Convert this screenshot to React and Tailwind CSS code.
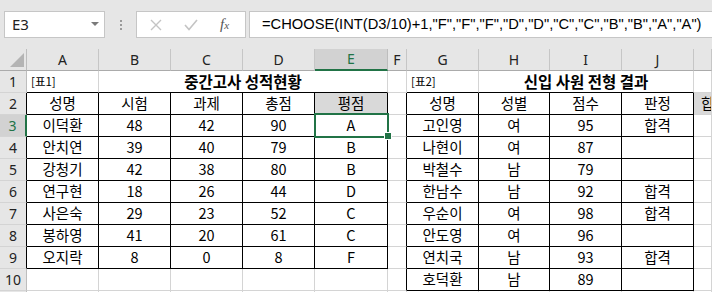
import React from "react";

const colWidths = "grid-cols-[27px_72px_72px_72px_72px_73px_19px_72px_71px_72px_72px_1fr]";
const letters = ["", "A", "B", "C", "D", "E", "F", "G", "H", "I", "J", ""];

const t1 = [
  ["성명", "시험", "과제", "총점", "평점"],
  ["이덕환", "48", "42", "90", "A"],
  ["안치연", "39", "40", "79", "B"],
  ["강청기", "42", "38", "80", "B"],
  ["연구현", "18", "26", "44", "D"],
  ["사은숙", "29", "23", "52", "C"],
  ["봉하영", "41", "20", "61", "C"],
  ["오지락", "8", "0", "8", "F"],
];
const t2 = [
  ["성명", "성별", "점수", "판정"],
  ["고인영", "여", "95", "합격"],
  ["나현이", "여", "87", ""],
  ["박철수", "남", "79", ""],
  ["한남수", "남", "92", "합격"],
  ["우순이", "여", "98", "합격"],
  ["안도영", "여", "96", ""],
  ["연치국", "남", "93", "합격"],
  ["호덕환", "남", "89", ""],
];

function inT1(r, c) {
  return r >= 2 && r <= 9 && c >= 1 && c <= 5;
}
function inT2(r, c) {
  return r >= 2 && r <= 10 && c >= 7 && c <= 10;
}
function inAny(r, c) {
  return inT1(r, c) || inT2(r, c);
}

function cellText(r, c) {
  if (c >= 1 && c <= 5 && r >= 2 && r <= 9) return t1[r - 2][c - 1];
  if (c >= 7 && c <= 10 && r >= 2 && r <= 10) return t2[r - 2][c - 7];
  if (r === 2 && c === 11) return "합";
  return "";
}

function Cell({ r, c }) {
  const rightBlack = inAny(r, c) || inAny(r, c + 1);
  const bottomBlack = inAny(r, c) || inAny(r + 1, c);
  const gray = (r === 2 && c === 5) || (r === 2 && c === 11);
  const text = cellText(r, c);
  return (
    <div
      className={
        "h-[22px] border-r border-b flex items-center overflow-hidden whitespace-nowrap text-[14.5px] leading-none text-black " +
        (rightBlack ? "border-r-black " : "border-r-[#d4d4d4] ") +
        (bottomBlack ? "border-b-black " : "border-b-[#d4d4d4] ") +
        (gray ? "bg-[#d9d9d9] " : "bg-white ") +
        (c === 11 ? "justify-start pl-[7px]" : "justify-center")
      }
    >
      {text}
    </div>
  );
}

function RowHeader({ r }) {
  const sel = r === 3;
  const black = r >= 2 && r <= 9;
  return (
    <div
      className={
        "h-[22px] border-b border-b-[#d4d4d4] flex items-center justify-center text-[14px] leading-none " +
        (sel
          ? "bg-[#d2d2d2] text-[#217346] border-r-2 border-r-[#217346]"
          : black
          ? "bg-[#e6e6e6] text-[#222] border-r border-r-black"
          : "bg-[#e6e6e6] text-[#222] border-r border-r-[#bdbdbd]")
      }
      style={{ fontFamily: "'Noto Sans', 'Liberation Sans', sans-serif" }}
    >
      {r <= 10 ? r : ""}
    </div>
  );
}

export default function App() {
  const rows = [];
  for (let r = 1; r <= 11; r++) {
    rows.push(<RowHeader key={"h" + r} r={r} />);
    if (r === 1) {
      rows.push(
        <div
          key="a1"
          className="h-[22px] border-r border-b border-r-[#d4d4d4] border-b-black bg-white flex items-center pl-[4px] text-[11.5px] leading-none text-black"
        >
          [표1]
        </div>
      );
      rows.push(
        <div
          key="b1"
          className="col-span-4 h-[22px] border-r border-b border-r-[#d4d4d4] border-b-black bg-white flex items-center justify-center text-[15.5px] font-bold leading-none text-black"
        >
          중간고사 성적현황
        </div>
      );
      rows.push(
        <div key="f1" className="h-[22px] border-r border-b border-r-[#d4d4d4] border-b-[#d4d4d4] bg-white" />
      );
      rows.push(
        <div
          key="g1"
          className="h-[22px] border-r border-b border-r-[#d4d4d4] border-b-black bg-white flex items-center pl-[4px] text-[11.5px] leading-none text-black"
        >
          [표2]
        </div>
      );
      rows.push(
        <div
          key="h1"
          className="col-span-3 h-[22px] border-r border-b border-r-[#d4d4d4] border-b-black bg-white flex items-center justify-center text-[15.5px] font-bold leading-none text-black"
        >
          신입 사원 전형 결과
        </div>
      );
      rows.push(
        <div key="k1" className="h-[22px] border-r border-b border-r-[#d4d4d4] border-b-[#d4d4d4] bg-white" />
      );
    } else {
      for (let c = 1; c <= 11; c++) rows.push(<Cell key={r + "-" + c} r={r} c={c} />);
    }
  }

  return (
    <div
      className="w-[712px] h-[292px] overflow-hidden bg-white relative"
      style={{ fontFamily: "'Noto Sans CJK KR', 'Noto Sans', sans-serif" }}
    >
      {/* formula bar */}
      <div className="h-[49px] bg-[#e6e6e6] flex items-start pt-[11px] pl-[4px]">
        <div className="w-[101px] h-[27px] bg-white border border-[#c6c6c6] flex items-center justify-between pl-[7px] pr-[5px]">
          <span
            className="text-[15px] leading-none text-[#222]"
            style={{ fontFamily: "'Noto Sans', 'Liberation Sans', sans-serif" }}
          >
            E3
          </span>
          <svg width="8" height="5" viewBox="0 0 8 5">
            <polygon points="0,0 8,0 4,4" fill="#7a7a7a" />
          </svg>
        </div>
        <div className="w-[31px] h-[27px] flex flex-col items-center justify-center gap-[2px]">
          <div className="w-[2px] h-[2px] bg-[#9a9a9a]" />
          <div className="w-[2px] h-[2px] bg-[#9a9a9a]" />
          <div className="w-[2px] h-[2px] bg-[#9a9a9a]" />
        </div>
        <div className="w-[110px] h-[27px] bg-white border border-[#c6c6c6] flex items-center">
          <svg width="12" height="12" viewBox="0 0 12 12" className="ml-[13px]">
            <path d="M1 1 L11 11 M11 1 L1 11" stroke="#c4c4c4" strokeWidth="1.4" fill="none" />
          </svg>
          <svg width="14" height="12" viewBox="0 0 14 12" className="ml-[22px]">
            <path d="M1 6 L5 10.5 L13 1" stroke="#c4c4c4" strokeWidth="1.6" fill="none" />
          </svg>
          <span
            className="ml-[22px] text-[15px] italic leading-none text-[#555]"
            style={{ fontFamily: "'Liberation Serif', serif" }}
          >
            f<span className="text-[11px]">x</span>
          </span>
        </div>
        <div className="ml-[3px] flex-1 h-[27px] bg-white border border-r-0 border-[#c6c6c6] flex items-center pl-[12px] overflow-hidden whitespace-nowrap">
          <span
            className="text-[14.7px] leading-none text-black"
            style={{ fontFamily: "'Liberation Sans', sans-serif" }}
          >
            =CHOOSE(INT(D3/10)+1,"F","F","F","D","D","C","C","B","B","A","A")
          </span>
        </div>
      </div>

      {/* sheet */}
      <div className={"grid " + colWidths}>
        {letters.map((l, i) =>
          i === 0 ? (
            <div
              key="corner"
              className="h-[22px] bg-[#e6e6e6] border-r border-b border-r-[#bdbdbd] border-b-[#ababab] flex items-end justify-end pr-[2px] pb-[3px]"
            >
              <svg width="14" height="14" viewBox="0 0 14 14">
                <polygon points="14,0 14,14 0,14" fill="#b4b4b4" />
              </svg>
            </div>
          ) : i === 5 ? (
            <div
              key={"c" + i}
              className="h-[22px] bg-[#d2d2d2] border-r border-r-[#bdbdbd] border-b-2 border-b-[#217346] flex items-center justify-center text-[14px] leading-none text-[#217346]"
              style={{ fontFamily: "'Noto Sans', 'Liberation Sans', sans-serif" }}
            >
              {l}
            </div>
          ) : (
            <div
              key={"c" + i}
              className="h-[22px] bg-[#e6e6e6] border-r border-b border-r-[#c6c6c6] border-b-[#ababab] flex items-center justify-center text-[14px] leading-none text-[#222]"
              style={{ fontFamily: "'Noto Sans', 'Liberation Sans', sans-serif" }}
            >
              {l}
            </div>
          )
        )}
        {rows}
      </div>

      {/* selection overlay */}
      <div className="absolute left-[314px] top-[113px] w-[75px] h-[25px] border-2 border-[#217346] pointer-events-none" />
      <div className="absolute left-[384px] top-[132px] w-[8px] h-[8px] bg-[#217346] border border-white pointer-events-none" />
    </div>
  );
}
